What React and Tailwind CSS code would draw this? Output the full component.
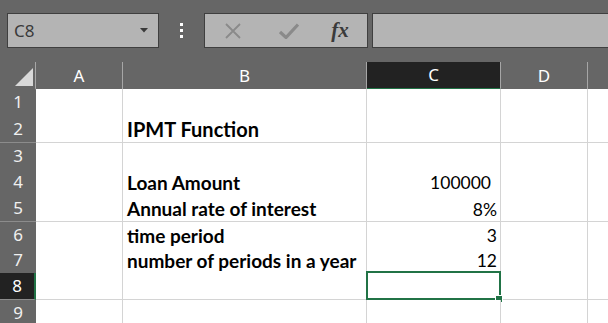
import React from "react";

const COLS = "grid grid-cols-[36px_87px_244px_134px_87px_1fr]";
const cellFont = { fontFamily: "Lato, 'Liberation Sans', sans-serif" };

const rows = [
  { n: 1, h: "h-[26px]", b: "", c: "" },
  { n: 2, h: "h-[28px]", b: "IPMT Function", c: "", title: true },
  { n: 3, h: "h-[26px]", b: "", c: "" },
  { n: 4, h: "h-[26px]", b: "Loan Amount", c: "100000", pad: true },
  { n: 5, h: "h-[27px]", b: "Annual rate of interest", c: "8%" },
  { n: 6, h: "h-[25px]", b: "time period", c: "3" },
  { n: 7, h: "h-[26px]", b: "number of periods in a year", c: "12" },
  { n: 8, h: "h-[27px]", b: "", c: "", sel: true },
  { n: 9, h: "h-[23px]", b: "", c: "" },
];

export default function App() {
  return (
    <div className="w-[608px] h-[323px] overflow-hidden bg-[#666666] select-none">
      {/* top bar */}
      <div className="h-[62px] flex items-start pt-[13px] pl-[7px]">
        <div className="w-[152px] h-[35px] bg-[#b4b4b4] border border-[#3f3f3f] flex items-center justify-between pl-[6px] pr-[10px]">
          <span className="text-[17px] text-[#3a3a3a] leading-none" style={{ fontFamily: "'Noto Sans', sans-serif" }}>C8</span>
          <svg width="8" height="5" viewBox="0 0 8 5"><path d="M0 0H8L4 4.5Z" fill="#3a3a3a" /></svg>
        </div>
        <div className="w-[45px] h-[35px] flex flex-col items-center justify-center gap-[3px]">
          <div className="w-[3px] h-[3px] bg-white" />
          <div className="w-[3px] h-[3px] bg-white" />
          <div className="w-[3px] h-[3px] bg-white" />
        </div>
        <div className="w-[164px] h-[35px] bg-[#b4b4b4] border border-[#3f3f3f] flex items-center">
          <div className="w-[54px] flex justify-center pl-[2px]">
            <svg width="18" height="16" viewBox="0 0 18 16"><path d="M2 1L16 15M16 1L2 15" stroke="#8a8a8a" strokeWidth="1.8" fill="none" /></svg>
          </div>
          <div className="w-[56px] flex justify-center pl-[4px]">
            <svg width="20" height="16" viewBox="0 0 20 16"><path d="M1 9L7 14.5L19 1.5" stroke="#8a8a8a" strokeWidth="3.2" fill="none" /></svg>
          </div>
          <div className="flex-1 flex justify-center pr-[2px]">
            <span className="text-[21px] italic font-bold text-[#3a3a3a] leading-none" style={{ fontFamily: "'Liberation Serif', serif" }}>fx</span>
          </div>
        </div>
        <div className="ml-[4px] flex-1 h-[35px] bg-[#b4b4b4] border border-[#3f3f3f] border-r-0" />
      </div>

      {/* column headers */}
      <div className={`${COLS} h-[27px] text-white text-[17px]`} style={{ fontFamily: "'Noto Sans', sans-serif" }}>
        <div className="relative border-r border-[#a6a6a6] border-b-2 border-b-[#666666]">
          <svg className="absolute left-[15px] top-[6px]" width="18" height="18" viewBox="0 0 18 18"><path d="M18 0V18H0Z" fill="#d9d9d9" /></svg>
        </div>
        <div className="flex items-center justify-center border-r border-[#a6a6a6]">A</div>
        <div className="flex items-center justify-center border-r border-[#a6a6a6]">B</div>
        <div className="flex items-center justify-center bg-[#222222] border-r border-[#a6a6a6] border-b-2 border-b-[#217346]">C</div>
        <div className="flex items-center justify-center border-r border-[#a6a6a6]">D</div>
        <div />
      </div>

      {/* rows */}
      {rows.map((r) => (
        <div key={r.n} className={`${COLS} ${r.h}`}>
          <div
            className={`flex items-center justify-center text-[17px] border-b border-[#8c8c8c] ${
              r.sel ? "bg-[#222222] text-white border-r-2 border-r-[#217346]" : "bg-[#666666] text-[#f0f0f0]"
            }`}
            style={{ fontFamily: "'Noto Sans', sans-serif" }}
          >
            {r.n}
          </div>
          <div className="bg-white border-r border-b border-[#d4d4d4]" />
          <div
            className={`bg-white border-r border-b border-[#d4d4d4] flex items-end pl-[4px] pb-[3px] font-bold text-black whitespace-nowrap ${
              r.title ? "text-[20px]" : "text-[19px]"
            } leading-none`}
            style={cellFont}
          >
            {r.b}
          </div>
          <div
            className={`relative bg-white border-r border-b border-[#d4d4d4] flex items-end justify-end pb-[3px] text-[17.5px] text-black leading-none ${
              r.pad ? "pr-[9px]" : "pr-[3px]"
            }`}
            style={cellFont}
          >
            {r.c}
            {r.sel && (
              <>
                <div className="absolute left-[-1px] top-[-2px] right-[-1px] bottom-[-1px] border-2 border-[#217346]" />
                <div className="absolute right-[-3px] bottom-[-4px] w-[6px] h-[6px] bg-[#217346] border border-white box-content" />
              </>
            )}
          </div>
          <div className="bg-white border-r border-b border-[#d4d4d4]" />
          <div className="bg-white border-b border-[#d4d4d4]" />
        </div>
      ))}
    </div>
  );
}
